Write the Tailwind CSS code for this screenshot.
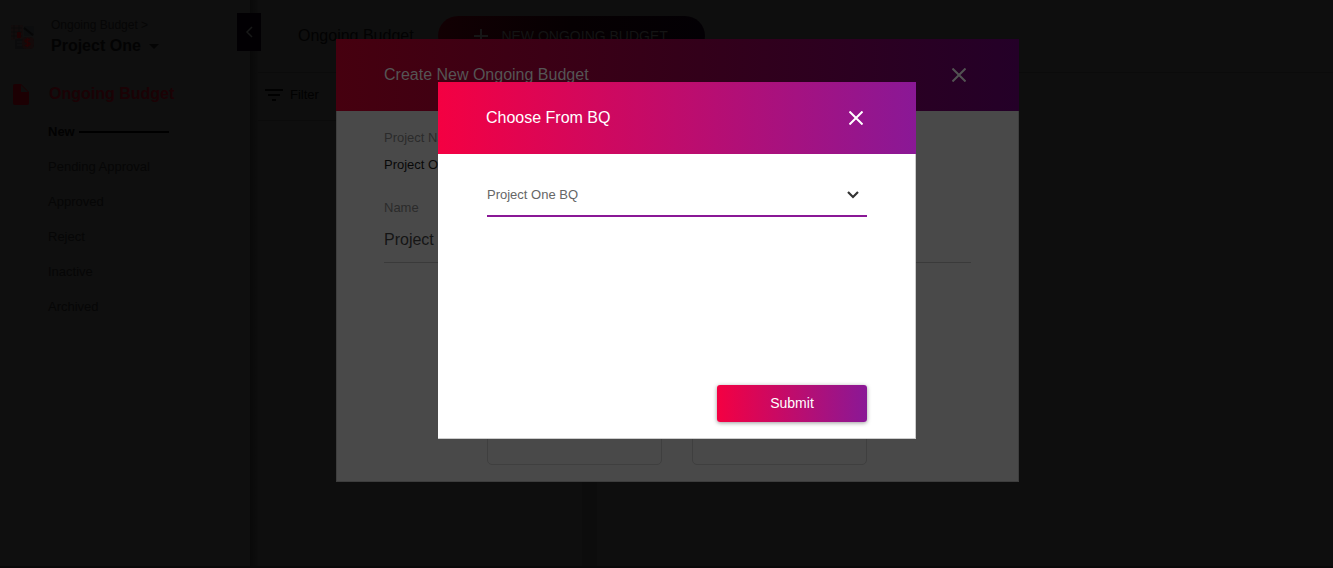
<!DOCTYPE html>
<html lang="en">
<head>
<meta charset="utf-8">
<meta name="viewport" content="width=device-width, initial-scale=1">
<title>Ongoing Budget</title>
<script src="https://cdn.jsdelivr.net/npm/@tailwindcss/browser@4"></script>
</head>
<body class="min-h-screen overflow-hidden bg-[#0e0e0e] font-['Liberation_Sans',Arial,sans-serif] text-black">
<div class="flex min-h-screen border-b-2 border-[#090909]">
  <aside class="relative w-[250px] shrink-0 bg-[#0f0f0f]">
    <div class="flex items-start pt-4 pl-2">
      <svg class="mt-2 h-7 w-7 shrink-0" viewBox="0 0 28 28" aria-hidden="true">
        <rect x="3" y="1" width="12" height="15" rx="1" fill="#120c0c"/>
        <path d="M3 4h11M3 8h11M3 12h11M6 1v14M11 1v14" stroke="#0b0b0b"/>
        <rect x="16" y="2" width="10" height="10" rx="2" fill="#0c0d0e"/>
        <path d="M16 4l9 7" stroke="#060606" stroke-width="2"/>
        <rect x="9" y="8" width="4" height="6" rx="1" fill="#1e0203"/>
        <rect x="7" y="15" width="9" height="10" rx="1" fill="#0b0b0c"/>
        <path d="M9 18h5M9 21h5" stroke="#131313"/>
        <rect x="14" y="13" width="12" height="12" rx="4" fill="#130a0a"/>
        <path d="M22 16c-1-1-5-1-5 1s5 1 5 3-4 2-5 1M19.500 14v9" fill="none" stroke="#240304" stroke-width="1.500"/>
      </svg>
      <div class="ml-[15px]">
        <a href="#" class="block text-[12px] leading-[18px] text-[#060606]">Ongoing Budget &gt;</a>
        <button class="flex items-center gap-2 text-[16px] leading-6 font-bold text-[#030303]">Project One
          <svg class="h-[5px] w-[10px]" viewBox="0 0 10 5" aria-hidden="true"><path d="M0 0h10L5 5z" fill="#040404"/></svg>
        </button>
      </div>
    </div>
    <button aria-label="Collapse menu" class="absolute top-[13px] left-[237px] z-10 flex h-[38px] w-[24px] items-center justify-center bg-[#020003]">
      <svg class="h-3 w-2" viewBox="0 0 8 12" aria-hidden="true"><path d="M7 1L2 6l5 5" fill="none" stroke="#181818" stroke-width="1.500"/></svg>
    </button>
    <h2 class="mt-6 flex items-center pl-3 text-[16px] leading-6 font-bold text-[#1b0205]">
      <svg class="mr-5 h-[21px] w-[17px]" viewBox="0 0 17 21" aria-hidden="true"><path d="M3 0h6l8 8v11a2 2 0 0 1-2 2H3a2 2 0 0 1-2-2V2a2 2 0 0 1 2-2z" fill="#1c0003"/><path d="M9 1v7h7z" fill="#0e0e0e"/></svg>
      Ongoing Budget
    </h2>
    <nav class="mt-4 flex flex-col gap-[15px] pl-12 text-[13px] leading-5">
      <a href="#" class="flex items-center gap-[4px] font-bold text-[#020202]">New<span class="h-[2px] w-[90px] bg-black"></span></a>
      <a href="#" class="text-[#060606]">Pending Approval</a>
      <a href="#" class="text-[#060606]">Approved</a>
      <a href="#" class="text-[#060606]">Reject</a>
      <a href="#" class="text-[#060606]">Inactive</a>
      <a href="#" class="text-[#060606]">Archived</a>
    </nav>
  </aside>
  <div class="w-2 shrink-0 bg-linear-to-r from-[#090909] to-[#0d0d0d]"></div>
  <main class="flex min-w-0 grow flex-col">
    <header class="flex h-[73px] shrink-0 items-start border-b border-[#0b0b0b] pl-10">
      <h1 class="pt-6 text-[16px] leading-6 text-[#020202]">Ongoing Budget</h1>
      <button class="mt-4 ml-6 flex h-10 w-[267px] items-center justify-center gap-[13px] rounded-[20px] bg-linear-to-r/srgb from-[#120003] via-[#060002] to-[#030004] text-[14px] text-[#141414]">
        <svg class="h-[14px] w-[14px]" viewBox="0 0 14 14" aria-hidden="true"><path d="M7 0v14M0 7h14" stroke="#161616" stroke-width="2"/></svg>
        NEW ONGOING BUDGET
      </button>
    </header>
    <div class="flex grow">
      <section class="w-[324px] shrink-0">
        <div class="flex h-12 items-center border-b border-[#0b0b0b] pl-[7px]">
          <button class="flex items-center gap-[7px] pb-[4px] text-[13px] leading-5 text-[#010101]">
            <svg class="h-3 w-[18px]" viewBox="0 0 18 12" aria-hidden="true"><path d="M0 1h18M3 6h12M7 11h4" stroke="#010101" stroke-width="2"/></svg>
            Filter
          </button>
        </div>
      </section>
      <div class="w-[15px] shrink-0 bg-[#0c0c0c]"></div>
    </div>
  </main>
</div>

<div class="fixed inset-0 z-20 flex items-start justify-center pt-[39px] pl-[22px]">
  <section role="dialog" aria-label="Create New Ongoing Budget" class="h-[443px] w-full max-w-[683px] border border-t-0 border-[#3d3d3d] bg-[#494949]">
    <header class="-mx-px flex h-[72px] items-center justify-between bg-linear-to-r/srgb from-[#46000f] via-[#340019] to-[#240028] pr-[53px] pl-12 text-[16px] text-[#555]">
      <h2>Create New Ongoing Budget</h2>
      <button aria-label="Close">
        <svg class="h-[14px] w-[14px]" viewBox="0 0 14 14" aria-hidden="true"><path d="M.5.5l13 13M13.500.500L.500 13.500" stroke="#525252" stroke-width="2"/></svg>
      </button>
    </header>
    <div class="px-[47px] pt-[17px]">
      <p class="text-[13px] leading-5 text-[#2b2b2b]">Project Name</p>
      <p class="mt-[7px] text-[13px] leading-5 text-[#080808]">Project One</p>
      <label for="budget-name" class="mt-[23px] block text-[13px] leading-5 text-[#2b2b2b]">Name</label>
      <input id="budget-name" type="text" value="Project One" class="block h-[45px] w-full border-b border-[#3a3a3a] bg-transparent text-[16px] text-[#151515] outline-none">
      <div class="mt-10 flex justify-center gap-[30px] pr-[2px]">
        <button aria-label="First budget source" class="h-[162px] w-[175px] rounded-[5px] border border-[#3f3f3f]"></button>
        <button aria-label="Second budget source" class="h-[162px] w-[175px] rounded-[5px] border border-[#3f3f3f]"></button>
      </div>
    </div>
  </section>
</div>

<div class="fixed inset-0 z-30 flex items-start justify-center pt-[82px] pl-[21px]">
  <form role="dialog" aria-label="Choose From BQ" class="flex h-[357px] w-full max-w-[478px] flex-col border-r border-b border-[#cccccc] bg-white">
    <header class="-mr-px flex h-[72px] shrink-0 items-center justify-between bg-linear-to-r/srgb from-[#f40042] to-[#8a1896] pr-[53px] pl-12 text-[16px] text-white">
      <h2>Choose From BQ</h2>
      <button type="button" aria-label="Close">
        <svg class="h-[14px] w-[14px]" viewBox="0 0 14 14" aria-hidden="true"><path d="M.5.5l13 13M13.500.500L.500 13.500" stroke="#fff" stroke-width="2"/></svg>
      </button>
    </header>
    <div class="flex grow flex-col items-end pt-5 pr-12 pb-4 pl-[49px]">
      <div class="relative w-full">
        <select aria-label="BQ" class="block h-[43px] w-full appearance-none border-b-2 border-[#8a1896] bg-transparent text-[13px] text-[#666] outline-none">
          <option>Project One BQ</option>
        </select>
        <svg class="pointer-events-none absolute top-[17px] right-2 h-2 w-3" viewBox="0 0 12 8" aria-hidden="true"><path d="M1 1l5 5 5-5" fill="none" stroke="#333" stroke-width="2.200"/></svg>
      </div>
      <button type="submit" class="mt-auto h-[37px] w-[150px] rounded-[3px] bg-linear-to-r/srgb from-[#f40042] to-[#8a1896] text-[14px] text-white shadow-[0_1px_4px_rgba(0,0,0,0.4)]">Submit</button>
    </div>
  </form>
</div>
</body>
</html>
